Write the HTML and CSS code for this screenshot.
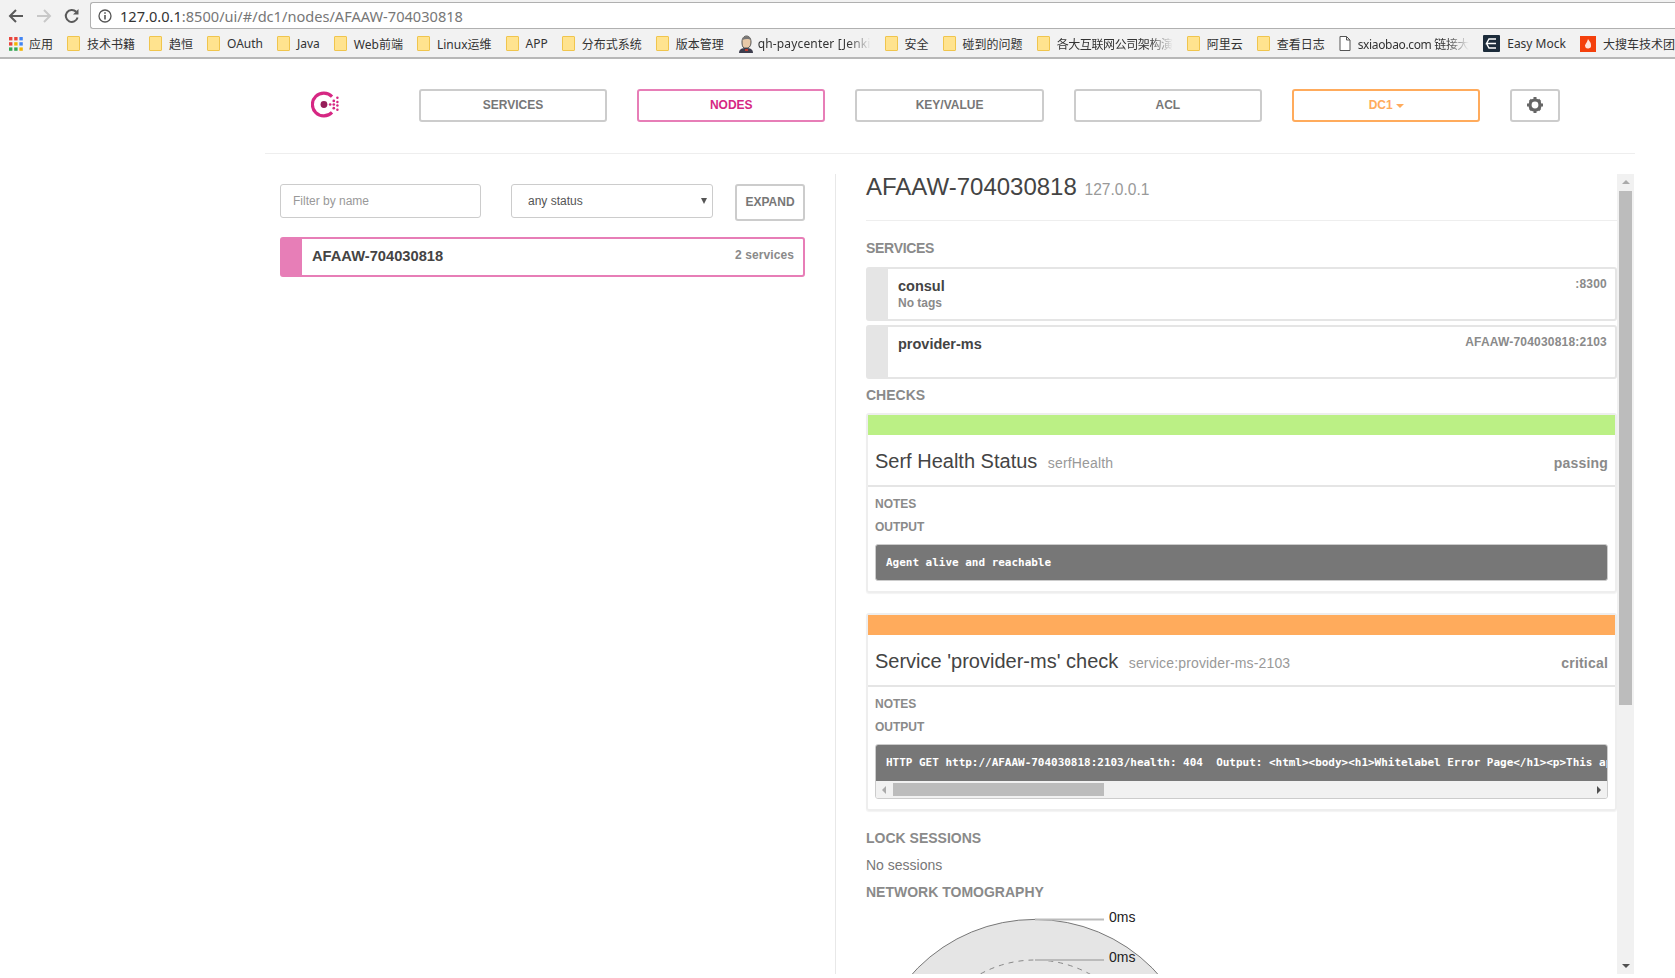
FILE: index.html

```html
<!DOCTYPE html>
<html lang="en">
<head>
  <meta charset="UTF-8">
  <title>Consul by HashiCorp</title>
  <link rel="stylesheet" href="styles.css">
</head>
<body>

<!-- browser chrome -->
<div class="toolbar">
  <svg class="tool-icon" width="18" height="18" viewBox="0 0 18 18"><path d="M16 9H3M9 3L3 9l6 6" fill="none" stroke="#5a5a5a" stroke-width="2"/></svg>
  <svg class="tool-icon" width="18" height="18" viewBox="0 0 18 18"><path d="M2 9h13M9 3l6 6-6 6" fill="none" stroke="#c8c8c8" stroke-width="2"/></svg>
  <svg class="tool-icon" width="18" height="18" viewBox="0 0 18 18"><path d="M14.6 10.5A6 6 0 1 1 13.2 4.8" fill="none" stroke="#5a5a5a" stroke-width="2"/><path d="M15.5 2v5.5H10z" fill="#5a5a5a"/></svg>
  <div class="address">
    <svg width="14" height="14" viewBox="0 0 14 14"><circle cx="7" cy="7" r="6" fill="none" stroke="#555" stroke-width="1.3"/><path d="M7 6v4.5M7 3.2v1.6" stroke="#555" stroke-width="1.6"/></svg>
    <span class="url"><span class="url-host">127.0.0.1</span>:8500/ui/#/dc1/nodes/AFAAW-704030818</span>
  </div>
</div>

<div class="bookmarks">
  <div class="bm bm-apps">
    <svg width="14" height="14" viewBox="0 0 14 14">
      <rect x="0" y="0" width="3.4" height="3.4" fill="#e8453c"/><rect x="5.2" y="0" width="3.4" height="3.4" fill="#e8453c"/><rect x="10.4" y="0" width="3.4" height="3.4" fill="#4285f4"/>
      <rect x="0" y="5.2" width="3.4" height="3.4" fill="#e8453c"/><rect x="5.2" y="5.2" width="3.4" height="3.4" fill="#f4b400"/><rect x="10.4" y="5.2" width="3.4" height="3.4" fill="#4285f4"/>
      <rect x="0" y="10.4" width="3.4" height="3.4" fill="#34a853"/><rect x="5.2" y="10.4" width="3.4" height="3.4" fill="#34a853"/><rect x="10.4" y="10.4" width="3.4" height="3.4" fill="#f4b400"/>
    </svg>
    <span>应用</span>
  </div>
  <div class="bm"><i class="folder"></i><span>技术书籍</span></div>
  <div class="bm"><i class="folder"></i><span>趋恒</span></div>
  <div class="bm"><i class="folder"></i><span>OAuth</span></div>
  <div class="bm"><i class="folder"></i><span>Java</span></div>
  <div class="bm"><i class="folder"></i><span>Web前端</span></div>
  <div class="bm"><i class="folder"></i><span>Linux运维</span></div>
  <div class="bm"><i class="folder"></i><span>APP</span></div>
  <div class="bm"><i class="folder"></i><span>分布式系统</span></div>
  <div class="bm"><i class="folder"></i><span>版本管理</span></div>
  <div class="bm bm-jenkins">
    <svg width="16" height="18" viewBox="0 0 16 18">
      <path d="M4 7c0-4 2-6 4.500-6S13 3 13 7c0 3-1 5-3 6H6C4.500 12 4 10 4 7z" fill="#e8c9a8" stroke="#555" stroke-width="1"/>
      <path d="M4.500 5C5 2 7 1 8.500 1S12.500 2 13 5C11 3.500 7 3.500 4.500 5z" fill="#777"/>
      <path d="M1 18c0-4 3-5 7-5s7 1 7 5z" fill="#3d3d4d"/>
      <path d="M7 14h3v2H7z" fill="#c0392b"/>
    </svg>
    <span class="fade">qh-paycenter [Jenki</span>
  </div>
  <div class="bm"><i class="folder"></i><span>安全</span></div>
  <div class="bm"><i class="folder"></i><span>碰到的问题</span></div>
  <div class="bm bm-arch"><i class="folder"></i><span class="fade">各大互联网公司架构演</span></div>
  <div class="bm"><i class="folder"></i><span>阿里云</span></div>
  <div class="bm"><i class="folder"></i><span>查看日志</span></div>
  <div class="bm bm-links">
    <svg width="12" height="15" viewBox="0 0 12 15"><path d="M1 .5h6.500L11 4v10.500H1zM7.500.5V4H11" fill="#fff" stroke="#555"/></svg>
    <span class="fade">sxiaobao.com 链接大</span>
  </div>
  <div class="bm">
    <svg width="17" height="17" viewBox="0 0 17 17"><rect width="17" height="17" rx="1" fill="#1c2b3a"/><path d="M13 4H6L3.500 8.500H13M3.500 8.500L6 13h7" fill="none" stroke="#fff" stroke-width="1.400"/></svg>
    <span>Easy Mock</span>
  </div>
  <div class="bm">
    <svg width="16" height="16" viewBox="0 0 16 16"><rect width="16" height="16" fill="#f4400c"/><path d="M8 3c1 2 3 3 3 6a3 3 0 0 1-6 1c0-2 2-3 3-7z" fill="#fff" opacity=".85"/></svg>
    <span>大搜车技术团</span>
  </div>
</div>

<div class="page">
  <div class="nav">
    <div class="logo">
      <svg width="29" height="27" viewBox="0 0 28 26">
        <path d="M20.300 5.400A11 11 0 1 0 20.300 20.600" fill="none" stroke="#d62783" stroke-width="3"/>
        <circle cx="12.500" cy="13" r="3.300" fill="#961d59"/>
        <g fill="#d62783">
          <circle cx="18.500" cy="13" r="1.300"/>
          <circle cx="22" cy="9.500" r="1.300"/><circle cx="22" cy="13" r="1.300"/><circle cx="22" cy="16.500" r="1.300"/>
          <circle cx="25.500" cy="6.500" r="1.200"/><circle cx="25.500" cy="10.500" r="1.200"/><circle cx="25.500" cy="14" r="1.200"/><circle cx="25.500" cy="18" r="1.200"/>
        </g>
      </svg>
    </div>
    <a class="nav-btn">SERVICES</a>
    <a class="nav-btn nav-active">NODES</a>
    <a class="nav-btn">KEY/VALUE</a>
    <a class="nav-btn">ACL</a>
    <a class="nav-btn nav-dc">DC1<i class="caret"></i></a>
    <a class="nav-btn nav-gear">
      <svg width="18" height="18" viewBox="0 0 18 18">
        <circle cx="9" cy="9" r="5" fill="none" stroke="#666" stroke-width="3.200"/>
        <path d="M7.500 1h3v3h-3zM7.500 14h3v3h-3zM1 7.500h3v3H1zM14 7.500h3v3h-3zM2.800 4.900l2.100-2.100 2 2-2.100 2.100zM11.100 13.200l2.100-2.100 2 2-2.100 2.100zM13.100 2.800l2.100 2.100-2 2-2.100-2.100zM4.900 11.100l2.100 2.100-2 2-2.100-2.100z" fill="#666"/>
      </svg>
    </a>
  </div>

  <div class="main">
    <div class="left">
      <div class="filters">
        <input class="filter-input" type="text" placeholder="Filter by name">
        <div class="filter-select">
          <select><option>any status</option></select>
          <span class="select-arrow"></span>
        </div>
        <button class="expand">EXPAND</button>
      </div>
      <div class="node-item">
        <div class="node-bar"></div>
        <div class="node-name">AFAAW-704030818</div>
        <div class="node-count">2 services</div>
      </div>
    </div>

    <div class="right">
      <div class="detail">
        <h3 class="title">AFAAW-704030818 <small>127.0.0.1</small></h3>
        <hr class="rule">

        <h5 class="label label-services">SERVICES</h5>
        <div class="svc">
          <div class="svc-bar"></div>
          <div class="svc-body">
            <div class="svc-name">consul</div>
            <div class="svc-sub">No tags</div>
          </div>
          <div class="svc-port">:8300</div>
        </div>
        <div class="svc">
          <div class="svc-bar"></div>
          <div class="svc-body">
            <div class="svc-name">provider-ms</div>
          </div>
          <div class="svc-port">AFAAW-704030818:2103</div>
        </div>

        <h5 class="label label-checks">CHECKS</h5>
        <div class="check">
          <div class="check-bar passing"></div>
          <div class="check-head">
            <span class="check-name">Serf Health Status</span>
            <span class="check-id">serfHealth</span>
            <span class="check-status">passing</span>
          </div>
          <div class="check-body">
            <div class="check-key">NOTES</div>
            <div class="check-key">OUTPUT</div>
            <pre class="output">Agent alive and reachable</pre>
          </div>
        </div>

        <div class="check check-second">
          <div class="check-bar critical"></div>
          <div class="check-head">
            <span class="check-name">Service 'provider-ms' check</span>
            <span class="check-id">service:provider-ms-2103</span>
            <span class="check-status">critical</span>
          </div>
          <div class="check-body">
            <div class="check-key">NOTES</div>
            <div class="check-key">OUTPUT</div>
            <div class="output-wrap">
              <pre class="output output-long">HTTP GET http://AFAAW-704030818:2103/health: 404  Output: &lt;html&gt;&lt;body&gt;&lt;h1&gt;Whitelabel Error Page&lt;/h1&gt;&lt;p&gt;This ap</pre>
              <div class="hscroll">
                <span class="arrow-left"></span>
                <div class="hscroll-track"><div class="hscroll-thumb"></div></div>
                <span class="arrow-right"></span>
              </div>
            </div>
          </div>
        </div>

        <h5 class="label label-lock">LOCK SESSIONS</h5>
        <p class="no-sessions">No sessions</p>
        <h5 class="label label-tomo">NETWORK TOMOGRAPHY</h5>
        <div class="tomography">
          <svg width="300" height="180" viewBox="0 0 300 180">
            <circle cx="169" cy="167" r="165.600" fill="#e5e5e5" stroke="#777" stroke-width="1"/>
            <circle cx="169" cy="156" r="114" fill="none" stroke="#888" stroke-width="1" stroke-dasharray="5 5"/>
            <path d="M169 1.500h69M169 42h69" stroke="#bbb" stroke-width="2"/>
          </svg>
          <span class="tomo-text tomo-text-1">0ms</span>
          <span class="tomo-text tomo-text-2">0ms</span>
        </div>
      </div>

      <div class="vscroll">
        <span class="arrow-up"></span>
        <div class="vscroll-thumb"></div>
        <span class="arrow-down"></span>
      </div>
    </div>
  </div>
</div>

</body>
</html>
```

FILE: styles.css

```css
html, body {
  margin: 0;
  padding: 0;
  height: 978px;
  background: #fff;
  overflow: hidden;
  font-family: 'Liberation Sans', Arial, sans-serif;
  color: #555;
}

/* browser chrome */
.toolbar {
  height: 30px;
  box-sizing: border-box;
  background: #f2f2f2;
  display: flex;
  align-items: center;
  padding: 1px 0 0 7px;
  gap: 10px;
}
.tool-icon {
  flex: none;
}
.address {
  margin-left: -1px;
  flex: 1;
  height: 27px;
  box-sizing: border-box;
  background: #fff;
  border: 1px solid #b0b0b0;
  border-right: none;
  border-top-left-radius: 3px;
  border-bottom-left-radius: 3px;
  display: flex;
  align-items: center;
  padding-left: 7px;
  gap: 8px;
}
.url {
  font-family: 'Noto Sans', sans-serif;
  font-size: 14.600px;
  color: #777;
}
.url-host {
  color: #333;
}
.bookmarks {
  height: 29px;
  box-sizing: border-box;
  background: #f2f2f2;
  border-bottom: 2px solid #b8b8b8;
  display: flex;
  align-items: center;
  padding-left: 9px;
  gap: 14px;
  overflow: hidden;
  white-space: nowrap;
  font-family: 'Noto Sans', 'Noto Sans CJK SC', sans-serif;
  font-size: 12px;
  color: #333;
}
.bm {
  display: flex;
  align-items: center;
  gap: 7px;
  flex: none;
}
.bm-apps {
  width: 44px;
  gap: 6px;
}
.bm-jenkins {
  gap: 4px;
  letter-spacing: .15px;
}
.bm-arch {
  letter-spacing: -.4px;
}
.bm-links {
  letter-spacing: -.35px;
}
.folder {
  display: block;
  width: 11px;
  height: 13px;
  background: #ffe38f;
  border: 1px solid #f0c54d;
  border-radius: 1px;
}
.fade {
  display: block;
  -webkit-mask-image: linear-gradient(to right, #000 80%, transparent);
  mask-image: linear-gradient(to right, #000 80%, transparent);
}

/* consul page */
.page {
  width: 1370px;
  margin-left: 265px;
}
.nav {
  height: 95px;
  box-sizing: border-box;
  border-bottom: 1px solid #eee;
  display: flex;
  align-items: flex-start;
  padding-top: 30px;
  gap: 30px;
}
.logo {
  width: 123.800px;
  padding: 2px 0 0 46px;
  box-sizing: border-box;
}
.nav-btn {
  width: 188.300px;
  height: 33px;
  box-sizing: border-box;
  border: 2px solid #ccc;
  border-radius: 3px;
  padding-bottom: 1px;
  font-size: 12px;
  font-weight: bold;
  color: #777;
  display: flex;
  align-items: center;
  justify-content: center;
}
.nav-active {
  border-color: #e77eb7;
  color: #d62783;
}
.nav-dc {
  border-color: #ffab5c;
  color: #ffab5c;
}
.caret {
  margin-left: 3px;
  margin-top: 2px;
  border-left: 4px solid transparent;
  border-right: 4px solid transparent;
  border-top: 4px solid #ffab5c;
}
.nav-gear {
  width: 50px;
}

.main {
  height: 820px;
  display: flex;
  padding-top: 20px;
  box-sizing: border-box;
  overflow: hidden;
}
.left {
  width: 571px;
  flex: none;
  box-sizing: border-box;
  border-right: 1px solid #e8e8e8;
  padding: 10px 30px 0 15px;
}
.filters {
  display: flex;
  align-items: flex-start;
}
.filter-input {
  width: 201px;
  height: 34px;
  box-sizing: border-box;
  border: 1px solid #ccc;
  border-radius: 3px;
  padding: 0 12px;
  font-family: inherit;
  font-size: 12px;
  outline: none;
}
.filter-input::placeholder {
  color: #999;
}
.filter-select {
  position: relative;
  margin-left: 30px;
  width: 202px;
  height: 34px;
}
.filter-select select {
  appearance: none;
  -webkit-appearance: none;
  width: 100%;
  height: 100%;
  box-sizing: border-box;
  border: 1px solid #ccc;
  border-radius: 3px;
  background: #fff;
  padding: 0 16px;
  font-family: inherit;
  font-size: 12px;
  color: #555;
}
.select-arrow {
  position: absolute;
  right: 6px;
  top: 14px;
  border-left: 3.500px solid transparent;
  border-right: 3.500px solid transparent;
  border-top: 6px solid #555;
}
.expand {
  margin-left: 22px;
  width: 70px;
  height: 37px;
  padding: 0 0 2px;
  background: #fff;
  border: 2px solid #ccc;
  border-radius: 3px;
  font-family: inherit;
  font-size: 12px;
  font-weight: bold;
  color: #777;
}
.node-item {
  margin-top: 16px;
  height: 40px;
  box-sizing: border-box;
  border: 2px solid #e77eb7;
  border-radius: 3px;
  display: flex;
  align-items: center;
}
.node-bar {
  width: 20px;
  align-self: stretch;
  background: #e77eb7;
}
.node-name {
  margin-left: 10px;
  margin-top: -2px;
  flex: 1;
  font-size: 14.700px;
  font-weight: bold;
  color: #444;
}
.node-count {
  margin-right: 9px;
  margin-top: -5px;
  font-size: 12px;
  font-weight: bold;
  letter-spacing: .1px;
  color: #8a8a8a;
}

.right {
  flex: 1;
  min-width: 0;
  display: flex;
  margin-left: 30px;
}
.detail {
  width: 751px;
  flex: none;
}
.title {
  margin: 0;
  height: 46px;
  padding-top: 1px;
  box-sizing: border-box;
  font-size: 24px;
  font-weight: normal;
  line-height: 24px;
  color: #444;
}
.title small {
  font-size: 15.600px;
  color: #999;
  margin-left: 1px;
}
.rule {
  margin: 0;
  border: none;
  border-top: 1px solid #eee;
}
.label {
  margin: 0;
  font-size: 14px;
  font-weight: bold;
  line-height: 16px;
  color: #8a8a8a;
}
.label-services {
  margin-top: 19px;
  margin-bottom: 11px;
  letter-spacing: -.3px;
}
.svc {
  height: 54px;
  margin-bottom: 4px;
  box-sizing: border-box;
  border: 2px solid #e5e5e5;
  border-radius: 3px;
  display: flex;
}
.svc-bar {
  width: 20px;
  background: #e5e5e5;
}
.svc-body {
  flex: 1;
  padding: 8px 0 0 10px;
}
.svc-name {
  font-size: 14.500px;
  font-weight: bold;
  line-height: 18px;
  color: #444;
}
.svc-sub {
  margin-top: 1px;
  font-size: 12px;
  font-weight: bold;
  line-height: 15px;
  color: #8a8a8a;
}
.svc-port {
  padding: 8px 8px 0 0;
  font-size: 12px;
  font-weight: bold;
  line-height: 14px;
  letter-spacing: .2px;
  color: #8a8a8a;
}
.label-checks {
  margin-top: 8px;
  margin-bottom: 10px;
}
.check {
  border: 2px solid #eee;
  border-radius: 3px;
  box-shadow: 0 1px 1px rgba(0,0,0,0.05);
}
.check-second {
  margin-top: 20px;
}
.check-bar {
  height: 20px;
}
.passing {
  background: #bbf085;
}
.critical {
  background: #ffab5c;
}
.check-head {
  height: 52px;
  box-sizing: border-box;
  border-bottom: 2px solid #e5e5e5;
  display: flex;
  align-items: baseline;
  padding: 14px 7px 0 7px;
}
.check-name {
  font-size: 20px;
  line-height: 24px;
  color: #444;
}
.check-id {
  margin-left: 10.500px;
  flex: 1;
  font-size: 14px;
  letter-spacing: .15px;
  color: #999;
}
.check-status {
  font-size: 14px;
  font-weight: bold;
  letter-spacing: .2px;
  color: #8a8a8a;
}
.check-body {
  padding: 9px 7px 10px 7px;
}
.check-key {
  height: 23px;
  font-size: 12px;
  font-weight: bold;
  line-height: 16px;
  color: #8a8a8a;
}
.output {
  margin: 2px 0 0;
  padding: 0 10px;
  height: 37px;
  box-sizing: border-box;
  border: 1px solid #ccc;
  border-radius: 3px;
  background: #777;
  font-family: 'DejaVu Sans Mono', monospace;
  font-size: 11px;
  font-weight: bold;
  line-height: 35px;
  letter-spacing: -.02px;
  color: #fff;
  overflow: hidden;
}
.output-wrap {
  margin-top: 2px;
  border: 1px solid #ccc;
  border-radius: 3px;
  overflow: hidden;
}
.output-long {
  margin: 0;
  height: 36px;
  border: none;
  border-radius: 0;
}
.hscroll {
  height: 17px;
  background: #f1f1f1;
  display: flex;
  align-items: center;
}
.hscroll-track {
  flex: 1;
  height: 13px;
}
.hscroll-thumb {
  width: 211px;
  height: 13px;
  background: #bcbcbc;
}
.arrow-left {
  margin: 0 7px 0 6px;
  border-top: 4px solid transparent;
  border-bottom: 4px solid transparent;
  border-right: 4px solid #aaa;
}
.arrow-right {
  margin: 0 6px 0 5px;
  border-top: 4px solid transparent;
  border-bottom: 4px solid transparent;
  border-left: 4px solid #505050;
}
.label-lock {
  margin-top: 19px;
}
.no-sessions {
  margin: 11px 0 0;
  font-size: 14px;
  line-height: 16px;
  color: #777;
}
.label-tomo {
  margin-top: 11px;
}
.tomography {
  position: relative;
  margin-top: 18px;
  height: 80px;
}
.tomography svg {
  display: block;
}
.tomo-text {
  position: absolute;
  left: 243px;
  font-size: 14px;
  line-height: 16px;
  color: #222;
}
.tomo-text-1 {
  top: -9px;
}
.tomo-text-2 {
  top: 31px;
}

.vscroll {
  width: 17px;
  flex: none;
  height: 800px;
  background: #f1f1f1;
  display: flex;
  flex-direction: column;
  align-items: center;
}
.vscroll-thumb {
  width: 13px;
  height: 514px;
  margin-top: 7px;
  background: #bcbcbc;
}
.arrow-up {
  margin-top: 6px;
  border-left: 4px solid transparent;
  border-right: 4px solid transparent;
  border-bottom: 4px solid #aaa;
}
.arrow-down {
  margin-top: auto;
  margin-bottom: 6px;
  border-left: 4px solid transparent;
  border-right: 4px solid transparent;
  border-top: 4px solid #505050;
}
```
